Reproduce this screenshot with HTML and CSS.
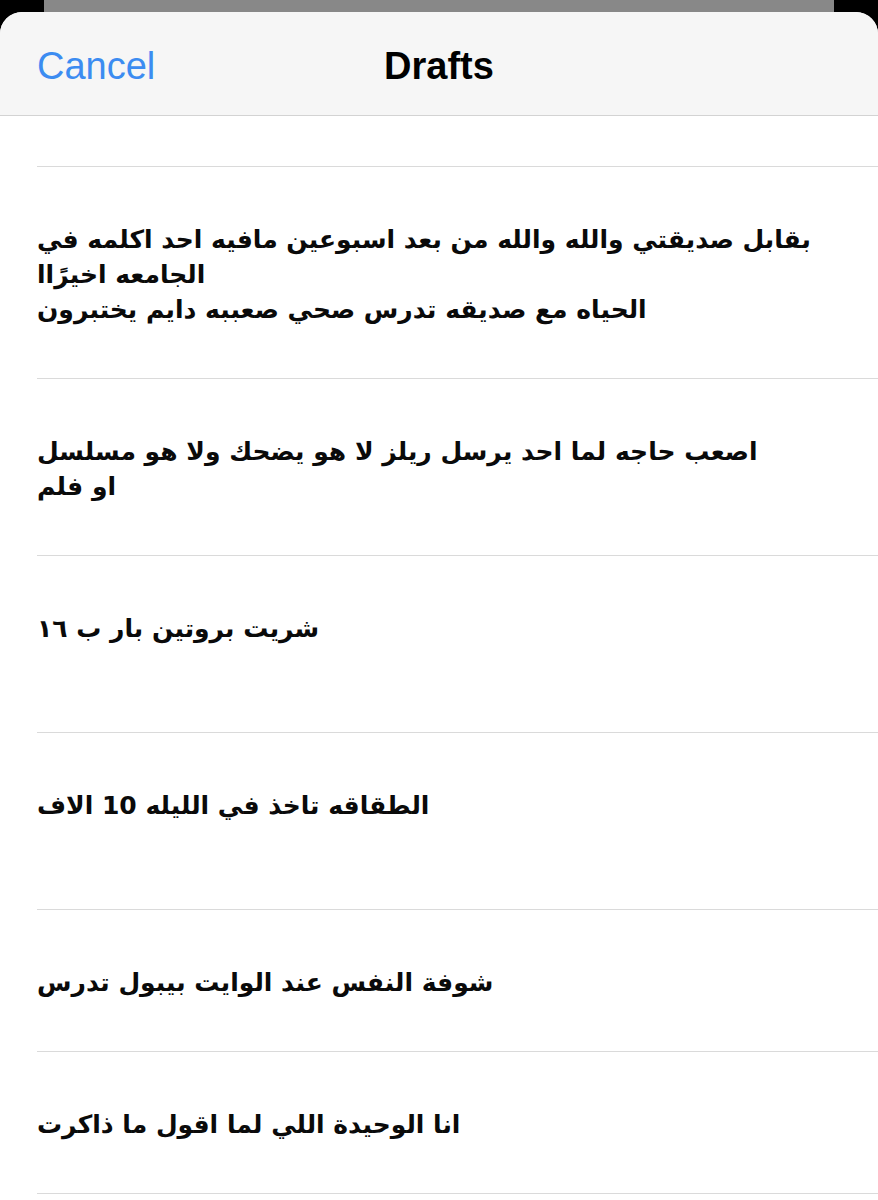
FILE: index.html
```html
<!DOCTYPE html>
<html lang="ar">
<head>
    <meta charset="UTF-8">
    <meta name="viewport" content="width=device-width, initial-scale=1.0">
    <title>Drafts</title>
<link rel="stylesheet" href="styles.css">
</head>
<body>
    <div class="back_card"></div>
    <div class="sheet">
        <header class="sheet_header">
            <a href="#" class="cancel_btn">Cancel</a>
            <h1 class="sheet_title">Drafts</h1>
            <span></span>
        </header>
        <ul class="draft_list">
            <li class="draft_row draft_row_cut"></li>
            <li class="draft_row">بقابل صديقتي والله والله من بعد اسبوعين مافيه احد اكلمه في
الجامعه اخيرًاا
الحياه مع صديقه تدرس صحي صعببه دايم يختبرون</li>
            <li class="draft_row">اصعب حاجه لما احد يرسل ريلز لا هو يضحك ولا هو مسلسل
او فلم</li>
            <li class="draft_row draft_row_tall">شريت بروتين بار ب ١٦</li>
            <li class="draft_row draft_row_tall">الطقاقه تاخذ في الليله 10 الاف</li>
            <li class="draft_row">شوفة النفس عند الوايت بيبول تدرس</li>
            <li class="draft_row">انا الوحيدة اللي لما اقول ما ذاكرت</li>
        </ul>
    </div>
</body>
</html>
```

FILE: styles.css
```css
*{
    margin: 0;
    padding: 0;
    box-sizing: border-box;
}
body{
    background-color: #000;
    font-family: "Liberation Sans", Arial, sans-serif;
}
.back_card{
    height: 12px;
    margin: 0 44px;
    background-color: #888888;
}
.sheet{
    background-color: #fff;
    border-radius: 22px 22px 0 0;
    overflow: hidden;
    min-height: 1188px;
}
.sheet_header{
    display: grid;
    grid-template-columns: 1fr auto 1fr;
    align-items: center;
    height: 104px;
    padding: 6px 37px 0;
    background-color: #f6f6f6;
    border-bottom: 1px solid #d3d3d3;
}
.cancel_btn{
    text-decoration: none;
    color: #3c8cf1;
    font-size: 38px;
}
.sheet_title{
    font-size: 38px;
    font-weight: bold;
    color: #000;
}
.draft_list{
    list-style: none;
    padding-left: 37px;
}
.draft_row{
    padding: 55px 20px 51px 0;
    border-bottom: 1px solid #dadada;
    white-space: pre-line;
    font-family: "DejaVu Sans", "Noto Sans", sans-serif;
    font-weight: bold;
    font-size: 25px;
    line-height: 35px;
    color: #0a0a0a;
    direction: ltr;
    text-align: left;
}
.draft_row_cut{
    height: 51px;
    padding: 0;
}
.draft_row_tall{
    padding-bottom: 86px;
}
```
